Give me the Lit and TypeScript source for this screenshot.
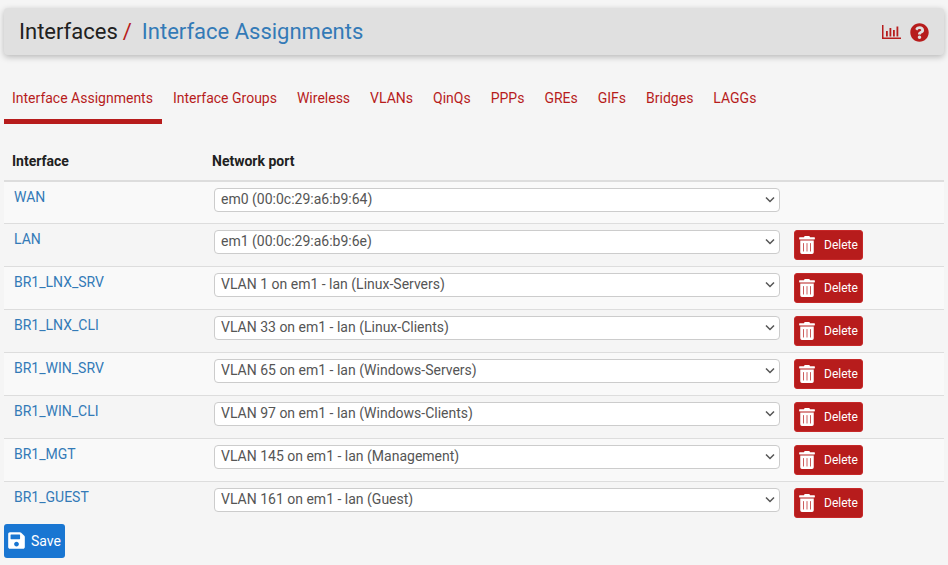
import { LitElement, html, css, svg } from "lit";
import { customElement } from "lit/decorators.js";

const tabs = ["Interface Assignments","Interface Groups","Wireless","VLANs","QinQs","PPPs","GREs","GIFs","Bridges","LAGGs"];
const rows: [string,string][] = [
  ["WAN","em0 (00:0c:29:a6:b9:64)"],
  ["LAN","em1 (00:0c:29:a6:b9:6e)"],
  ["BR1_LNX_SRV","VLAN 1 on em1 - lan (Linux-Servers)"],
  ["BR1_LNX_CLI","VLAN 33 on em1 - lan (Linux-Clients)"],
  ["BR1_WIN_SRV","VLAN 65 on em1 - lan (Windows-Servers)"],
  ["BR1_WIN_CLI","VLAN 97 on em1 - lan (Windows-Clients)"],
  ["BR1_MGT","VLAN 145 on em1 - lan (Management)"],
  ["BR1_GUEST","VLAN 161 on em1 - lan (Guest)"],
];
const trash = svg`<path d="M32 464a48 48 0 0 0 48 48h288a48 48 0 0 0 48-48V128H32zm280-256a10 10 0 0 1 20 0v224a10 10 0 0 1-20 0zm-98 0a10 10 0 0 1 20 0v224a10 10 0 0 1-20 0zm-98 0a10 10 0 0 1 20 0v224a10 10 0 0 1-20 0zM432 32H312l-9.400-18.700A24 24 0 0 0 281.100 0H166.800a23.720 23.720 0 0 0-21.400 13.300L136 32H16A16 16 0 0 0 0 48v32a16 16 0 0 0 16 16h416a16 16 0 0 0 16-16V48a16 16 0 0 0-16-16z"/>`;
const save = svg`<path d="M433.941 129.941l-83.882-83.882A48 48 0 0 0 316.118 32H48C21.490 32 0 53.490 0 80v352c0 26.510 21.490 48 48 48h352c26.510 0 48-21.490 48-48V163.882a48 48 0 0 0-14.059-33.941zM224 416c-35.346 0-64-28.654-64-64 0-35.346 28.654-64 64-64s64 28.654 64 64c0 35.346-28.654 64-64 64zm96-304.520V212c0 6.627-5.373 12-12 12H76c-6.627 0-12-5.373-12-12V108c0-6.627 5.373-12 12-12h228.520c3.183 0 6.235 1.264 8.485 3.515l3.480 3.480A11.996 11.996 0 0 1 320 111.480z"/>`;
const help = svg`<path d="M504 256c0 136.997-111.043 248-248 248S8 392.997 8 256C8 119.083 119.043 8 256 8s248 111.083 248 248zM262.655 90c-54.497 0-89.255 22.957-116.549 63.758-3.536 5.286-2.353 12.415 2.715 16.258l34.699 26.310c5.205 3.947 12.621 3.008 16.665-2.122 17.864-22.658 30.113-35.797 57.303-35.797 20.429 0 45.698 13.148 45.698 32.958 0 14.976-12.363 22.667-32.534 33.976C247.128 238.528 216 254.941 216 296v4c0 6.627 5.373 12 12 12h56c6.627 0 12-5.373 12-12v-1.333c0-28.462 83.186-29.647 83.186-106.667 0-58.002-60.165-102-116.531-102zM256 338c-25.365 0-46 20.635-46 46 0 25.364 20.635 46 46 46s46-20.636 46-46c0-25.365-20.635-46-46-46z"/>`;

@customElement("app-root")
export class AppRoot extends LitElement {
  static styles = css`
    :host { display: block; height: 565px; overflow: hidden; background: #f5f5f5; font-family: Roboto, sans-serif; font-size: 14px; color: #212121; padding: 8px 4px 0; box-sizing: border-box; }
    .head { height: 47px; display: flex; align-items: center; background: #e0e0e0; border-radius: 4px; box-shadow: 0 2px 6px rgba(0,0,0,.25); padding: 0 15px; box-sizing: border-box; font-size: 22px; }
    .head .sep { color: #b71c1c; margin: 0 10px 0 5px; }
    .head a { color: #337ab7; }
    .head .icons { margin-left: auto; margin-top: 1px; display: flex; align-items: center; gap: 9px; }
    .head svg { display: block; fill: #b71c1c; }
    .tabs { display: flex; margin-top: 24px; height: 40px; gap: 4px; }
    .tab { padding: 0 8px; color: #b71c1c; line-height: 39px; border-bottom: 5px solid transparent; height: 40px; white-space: nowrap; box-sizing: content-box; }
    .tab.on { border-bottom-color: #b71c1c; padding-right: 9px; margin-right: -1px; }
    .table { margin-top: 26px; }
    .row { display: grid; grid-template-columns: 200px 580px 1fr; height: 43px; border-top: 1px solid #ddd; box-sizing: border-box; }
    .row.h { height: 37px; border-top: 0; border-bottom: 2px solid #ddd; font-weight: 700; color: #212121; }
    .row.h div { padding: 8px 8px 0; }
    .row.h + .row { border-top: 0; height: 41px; }
    .row.odd { background: #f9f9f9; }
    .name { padding: 5px 10px 0; color: #337ab7; line-height: 20px; }
    .cell { padding: 6px 0 0 10px; }
    .pick { position: relative; width: 566px; height: 24px; }
    select { display: block; width: 100%; height: 24px; font: 14px Roboto, sans-serif; color: #555; background: #fff; border: 1px solid #ccc; border-radius: 4px; padding: 0 6px 2px; box-sizing: border-box; appearance: none; -webkit-appearance: none; }
    .chev { position: absolute; right: 4px; top: 8px; display: block; fill: none; stroke: #555; stroke-width: 1.500; pointer-events: none; }
    .del { display: inline-flex; align-items: center; gap: 9px; height: 30px; width: 69px; box-sizing: border-box; background: #b71c1c; color: #fff; border: 1px solid #c62828; border-radius: 3px; font-size: 12px; padding: 0 0 0 4px; }
    .del svg, .save svg { fill: #fff; display: block; }
    .save { display: inline-flex; align-items: center; gap: 6px; height: 34px; width: 61px; margin-top: 0; box-sizing: border-box; background: #1976d2; color: #fff; border-radius: 3px; padding: 0 0 1px 4px; font-size: 14px; }
  `;
  render() {
    return html`
      <div class="head">
        <span>Interfaces</span><span class="sep">/</span><a>Interface Assignments</a>
        <div class="icons">
          <svg width="19" height="14" viewBox="0 0 19 14"><path d="M0 0h1.500v12.500H19V14H0z"/><path d="M4 6h1.800v5.500H4zM7.500 3h1.800v8.500H7.500zM11 5h1.800v6.500H11zM14.500 1.500h1.800v10h-1.800z"/></svg>
          <svg width="19" height="19" viewBox="0 0 512 512">${help}</svg>
        </div>
      </div>
      <div class="tabs">${tabs.map((t,i)=>html`<div class="tab ${i===0?"on":""}">${t}</div>`)}</div>
      <div class="table">
        <div class="row h"><div>Interface</div><div>Network port</div><div></div></div>
        ${rows.map(([n,p],i)=>html`<div class="row ${i%2===0?"odd":""}">
          <div class="name">${n}</div>
          <div class="cell"><div class="pick"><select><option>${p}</option></select><svg class="chev" width="12" height="8" viewBox="0 0 12 8"><path d="M2 1.500 6 5.500l4-4"/></svg></div></div>
          <div class="cell">${i>0?html`<div class="del"><svg width="16" height="18" viewBox="0 0 448 512">${trash}</svg>Delete</div>`:""}</div>
        </div>`)}
      </div>
      <div class="save"><svg width="17" height="19" viewBox="0 0 448 512">${save}</svg>Save</div>
    `;
  }
}
